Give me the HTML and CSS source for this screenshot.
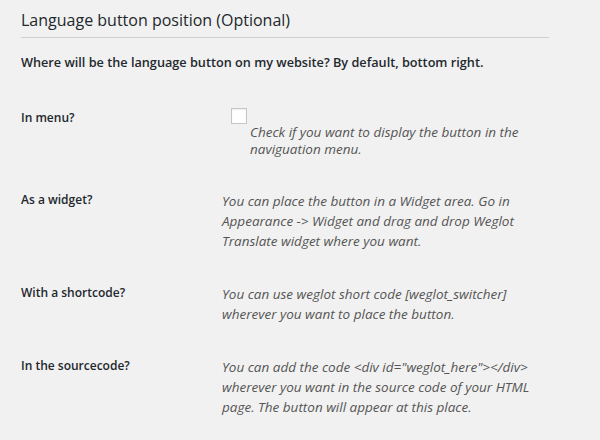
FILE: index.html
```html
<!DOCTYPE html>
<html lang="en">
<head>
    <meta charset="UTF-8">
    <title>Weglot settings</title>
    <link rel="stylesheet" href="styles.css">
</head>
<body>

<div class="wrap">
    <h2 class="section-title">Language button position (Optional)</h2>
    <p class="intro">Where will be the language button on my website? By default, bottom right.</p>

    <div class="form-table">
        <div class="row">
            <div class="label">In menu?</div>
            <div class="field">
                <span class="checkbox"></span>
                <p class="description">Check if you want to display the button in the naviguation menu.</p>
            </div>
        </div>

        <div class="row">
            <div class="label">As a widget?</div>
            <div class="field">
                <p class="note">You can place the button in a Widget area. Go in Appearance -&gt; Widget and drag and drop Weglot Translate widget where you want.</p>
            </div>
        </div>

        <div class="row">
            <div class="label">With a shortcode?</div>
            <div class="field">
                <p class="note">You can use weglot short code [weglot_switcher] wherever you want to place the button.</p>
            </div>
        </div>

        <div class="row">
            <div class="label">In the sourcecode?</div>
            <div class="field">
                <p class="note">You can add the code &lt;div id="weglot_here"&gt;&lt;/div&gt; wherever you want in the source code of your HTML page. The button will appear at this place.</p>
            </div>
        </div>
    </div>
</div>

</body>
</html>
```

FILE: styles.css
```css
html, body {
    margin: 0;
    background-color: #f1f1f1;
}
body {
    font-family: "Open Sans", "Noto Sans", sans-serif;
    color: #23282d;
    font-size: 12px;
}
.wrap {
    padding-left: 21px;
    width: 528px;
}
.section-title {
    margin: 0;
    padding: 9px 0 6px;
    font-size: 16px;
    font-weight: 400;
    line-height: 22px;
    border-bottom: 1px solid #cfcfcf;
}
.intro {
    margin: 16px 0 0;
    font-weight: 600;
    font-size: 12.7px;
    line-height: 17px;
}
.form-table {
    margin-top: 37px;
}
.row {
    display: grid;
    grid-template-columns: 201px 320px;
    padding-bottom: 32px;
}
.label {
    font-weight: 600;
    line-height: 20px;
}
.checkbox {
    display: block;
    width: 14px;
    height: 14px;
    margin-left: 9px;
    border: 1px solid #c3c6c9;
    background: #fff;
    box-shadow: inset 0 1px 2px rgba(0, 0, 0, 0.07);
}
.description {
    margin: 0 0 0 28px;
    font-size: 13.5px;
    font-style: italic;
    color: #555;
    line-height: 17px;
}
.note {
    margin: 0;
    padding-top: 1px;
    font-size: 13.5px;
    font-style: italic;
    color: #555;
    line-height: 20px;
}
```
